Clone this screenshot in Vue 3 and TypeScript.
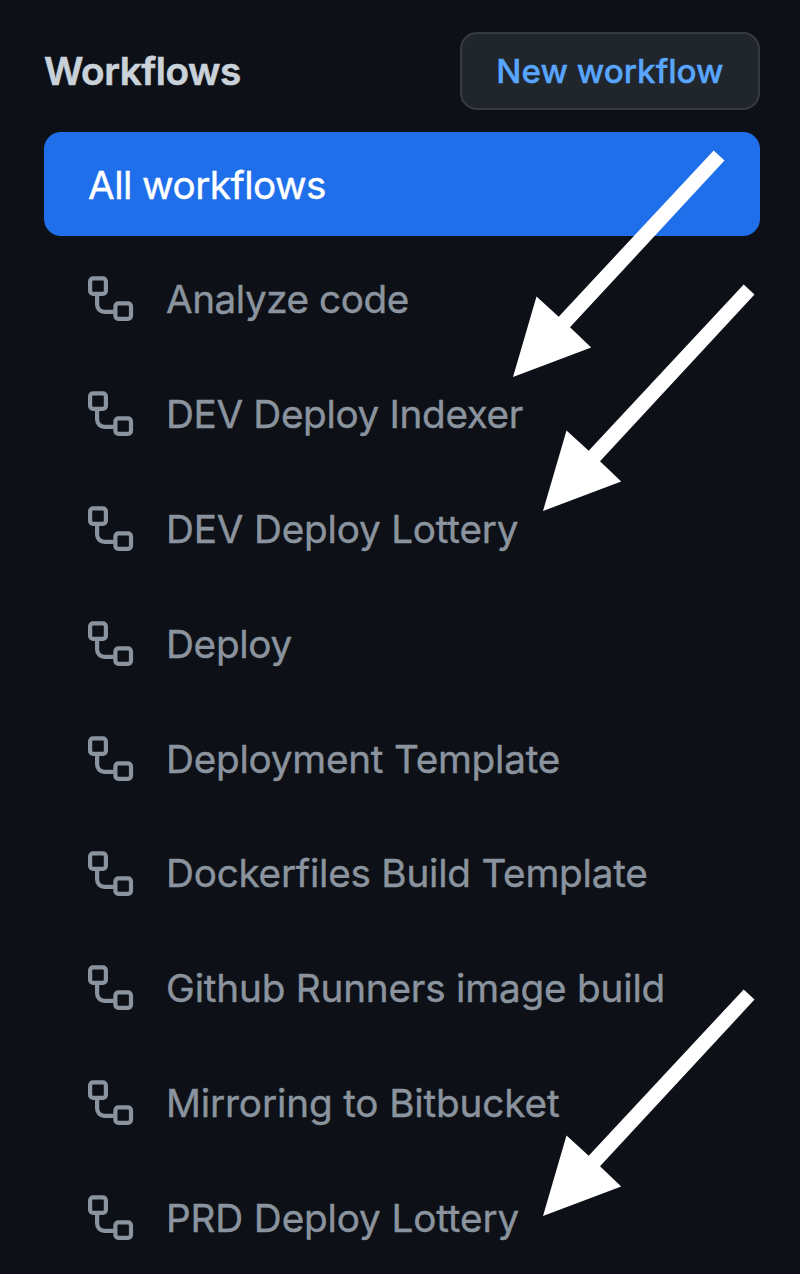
<script setup lang="ts">
interface Workflow {
  name: string
  key: string
}

const workflows: Workflow[] = [
  { name: 'Analyze code', key: 'analyze' },
  { name: 'DEV Deploy Indexer', key: 'dev-indexer' },
  { name: 'DEV Deploy Lottery', key: 'dev-lottery' },
  { name: 'Deploy', key: 'deploy' },
  { name: 'Deployment Template', key: 'deployment' },
  { name: 'Dockerfiles Build Template', key: 'dockerfiles' },
  { name: 'Github Runners image build', key: 'runners' },
  { name: 'Mirroring to Bitbucket', key: 'mirroring' },
  { name: 'PRD Deploy Lottery', key: 'prd-lottery' },
]

// Tip position of each annotation arrow
const arrows = [
  { x: 513, y: 377 },
  { x: 543, y: 511 },
  { x: 543, y: 1216 },
]
</script>

<template>
  <aside class="sidebar">
    <header class="head">
      <h2 class="title">Workflows</h2>
      <button class="new" type="button">New workflow</button>
    </header>
    <nav class="list">
      <a class="row active"><span class="all">All workflows</span></a>
      <a v-for="w in workflows" :key="w.key" class="row">
        <svg class="icon" width="46" height="45" viewBox="0 0 46 45" fill="none" stroke="currentColor" stroke-width="4.2">
          <rect x="2.1" y="2.4" width="15.8" height="15.4" rx="3" />
          <rect x="27.4" y="27.4" width="15.6" height="15.4" rx="3" />
          <path d="M9.1 19v9.6a7.2 7.2 0 0 0 7.2 7.2h9.5" />
        </svg>
        <span class="name" :class="w.key">{{ w.name }}</span>
      </a>
    </nav>
    <svg class="arrows" width="800" height="1274" viewBox="0 0 800 1274">
      <polygon
        v-for="a in arrows"
        :key="a.y"
        :transform="`translate(${a.x} ${a.y})`"
        points="0,0 23.5,-80.5 45.7,-60.3 200.7,-226.6 211.5,-216.4 57,-49.7 78.2,-29.4"
      />
    </svg>
  </aside>
</template>

<style>
html,
body {
  background: #0d1117;
}
</style>

<style scoped>
.sidebar {
  position: relative;
  box-sizing: border-box;
  width: 800px;
  height: 1274px;
  padding: 32px 40px 0 44px;
  overflow: hidden;
  background: #0d1117;
  font-family: Inter, "Liberation Sans", sans-serif;
  color: #8b949e;
}
.head {
  display: flex;
  align-items: center;
  justify-content: space-between;
  height: 78px;
  margin-bottom: 22px;
}
.title {
  margin: 0;
  font-size: 38.7px;
  font-weight: 600;
  line-height: 48px;
  letter-spacing: -0.45px;
  color: #c9d1d9;
  -webkit-text-stroke: 0.6px currentColor;
}
.new {
  box-sizing: border-box;
  width: 300px;
  height: 78px;
  padding: 0;
  border: 2px solid #363b42;
  border-radius: 17px;
  background: #21262d;
  color: #58a6ff;
  font: 500 33.2px/40px Inter, "Liberation Sans", sans-serif;
  -webkit-text-stroke: 0.4px currentColor;
}
.list {
  display: flex;
  flex-direction: column;
  gap: 10.85px;
}
.row {
  display: flex;
  flex: none;
  align-items: center;
  height: 104px;
  padding-left: 44px;
  font-size: 38.7px;
  line-height: 48px;
  white-space: nowrap;
  -webkit-text-stroke: 0.4px currentColor;
}
.active {
  border-radius: 17px;
  background: #1f6feb;
  color: #fff;
}
.all {
  padding-top: 1px;
  letter-spacing: -0.55px;
}
.name {
  padding-top: 0.8px;
  letter-spacing: -0.2px;
}
.name.analyze {
  letter-spacing: -0.47px;
}
.name.dev-indexer {
  letter-spacing: -0.35px;
}
.name.deploy {
  letter-spacing: -0.3px;
}
.name.deployment,
.name.dockerfiles {
  letter-spacing: -0.24px;
}
.name.mirroring,
.name.prd-lottery {
  letter-spacing: -0.14px;
}
.icon {
  flex: none;
  margin-right: 32px;
}
.arrows {
  position: absolute;
  top: 0;
  left: 0;
  fill: #fff;
  pointer-events: none;
}
</style>
